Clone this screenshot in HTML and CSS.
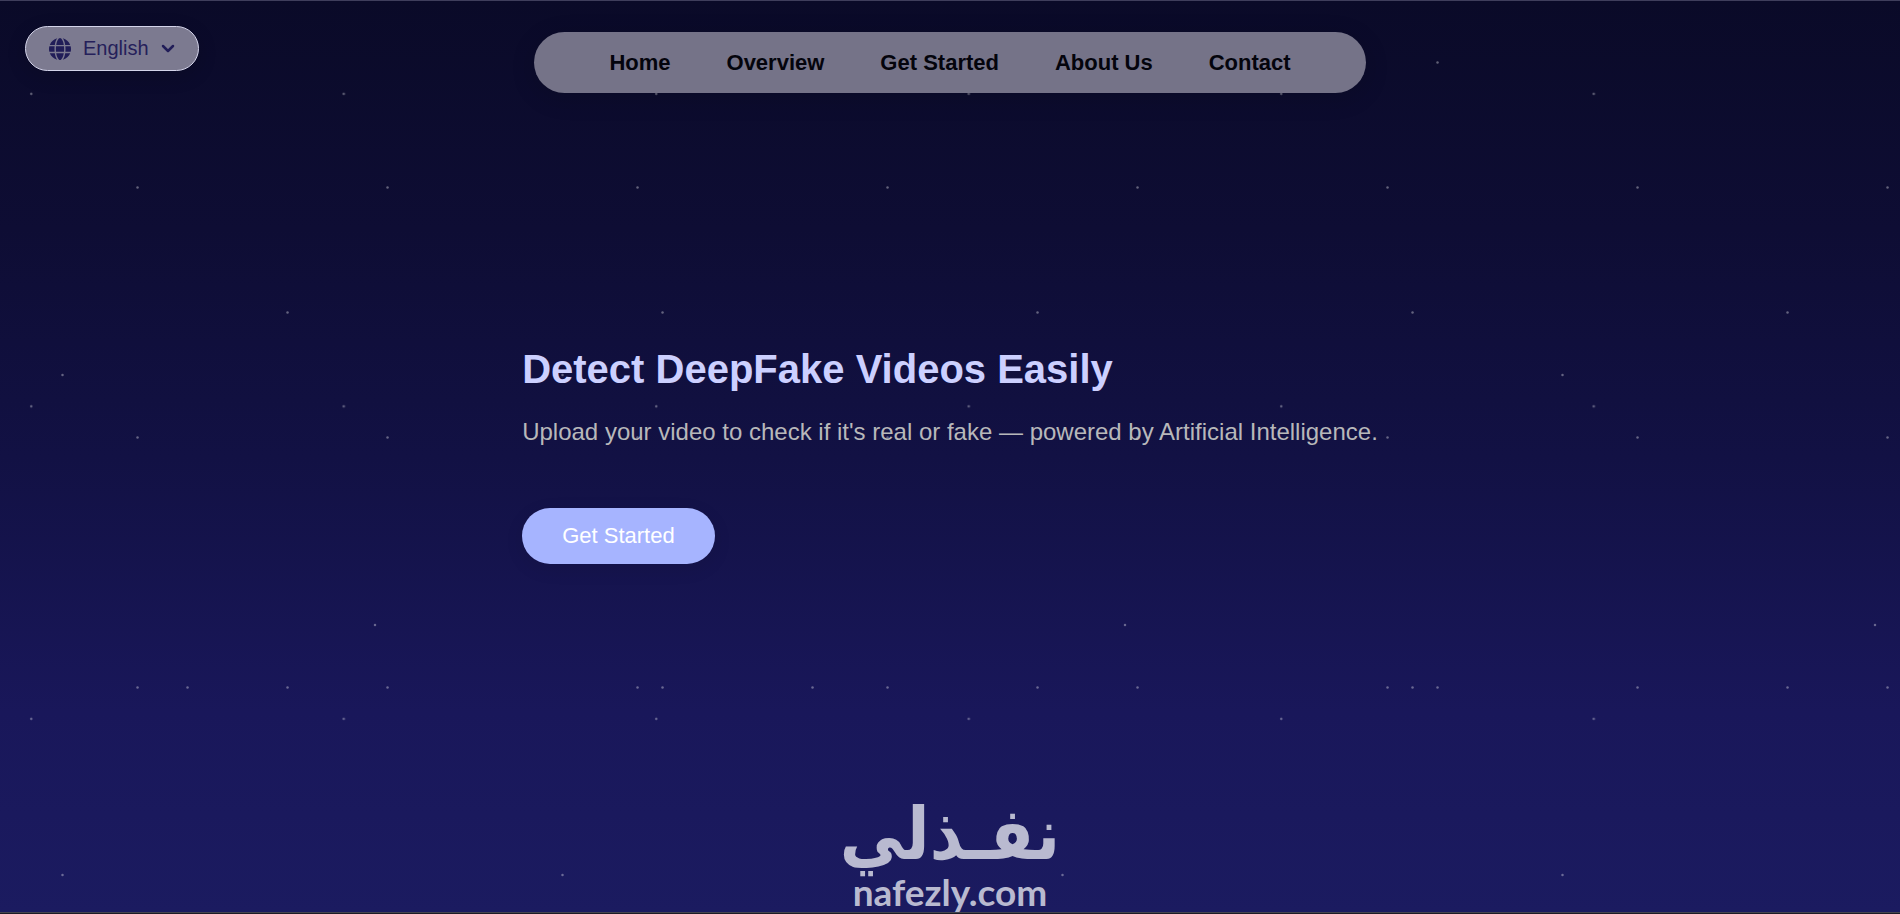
FILE: index.html
```html
<!DOCTYPE html>
<html lang="en">
<head>
<meta charset="utf-8">
<title>DeepFake Detector</title>
<link rel="stylesheet" href="styles.css">
</head>
<body>
<svg class="stars" aria-hidden="true">
  <defs>
    <pattern id="s1" width="200" height="200" patternUnits="userSpaceOnUse" patternTransform="scale(1.25)"><circle cx="110" cy="150" r="1"/></pattern>
    <pattern id="s2" width="250" height="250" patternUnits="userSpaceOnUse" patternTransform="scale(1.25)"><circle cx="25" cy="75" r="1"/></pattern>
    <pattern id="s3" width="300" height="300" patternUnits="userSpaceOnUse" patternTransform="scale(1.25)"><circle cx="230" cy="250" r="1"/></pattern>
    <pattern id="s4" width="400" height="400" patternUnits="userSpaceOnUse" patternTransform="scale(1.25)"><circle cx="50" cy="300" r="1"/></pattern>
    <pattern id="s5" width="500" height="500" patternUnits="userSpaceOnUse" patternTransform="scale(1.25)"><circle cx="150" cy="50" r="1"/></pattern>
    <pattern id="s6" width="600" height="600" patternUnits="userSpaceOnUse" patternTransform="scale(1.25)"><circle cx="300" cy="500" r="1"/></pattern>
  </defs>
  <rect width="100%" height="100%" fill="url(#s1)"/>
  <rect width="100%" height="100%" fill="url(#s2)"/>
  <rect width="100%" height="100%" fill="url(#s3)"/>
  <rect width="100%" height="100%" fill="url(#s4)"/>
  <rect width="100%" height="100%" fill="url(#s5)"/>
  <rect width="100%" height="100%" fill="url(#s6)"/>
</svg>
<div class="page">
  <header class="top">
    <button class="lang" type="button">
      <svg class="globe" viewBox="0 0 512 512" aria-hidden="true"><path d="M352 256c0 22.200-1.200 43.600-3.300 64H163.300c-2.200-20.400-3.300-41.800-3.300-64s1.200-43.600 3.300-64H348.700c2.200 20.400 3.300 41.800 3.300 64zm28.800-64H503.900c5.300 20.500 8.100 41.900 8.100 64s-2.800 43.500-8.100 64H380.800c2.100-20.600 3.200-42 3.200-64s-1.100-43.400-3.200-64zm112.600-32H376.700c-10-63.900-29.800-117.400-55.300-151.600c78.300 20.700 142 77.500 171.900 151.600zm-149.100 0H167.700c6.100-36.400 15.500-68.600 27-94.700c10.500-23.600 22.200-40.700 33.500-51.500C239.400 3.200 248.700 0 256 0s16.600 3.200 27.800 13.800c11.300 10.800 23 27.900 33.500 51.500c11.600 26 20.900 58.200 27 94.700zm-209 0H18.600C48.600 85.900 112.200 29.100 190.600 8.400C165.100 42.600 145.300 96.100 135.300 160zM8.100 192H131.200c-2.100 20.600-3.200 42-3.200 64s1.100 43.400 3.200 64H8.100C2.800 299.500 0 278.100 0 256s2.800-43.500 8.100-64zM194.700 446.600c-11.600-26-20.900-58.200-27-94.600H344.300c-6.100 36.400-15.500 68.600-27 94.600c-10.500 23.600-22.200 40.700-33.500 51.500C272.600 508.800 263.300 512 256 512s-16.600-3.200-27.800-13.800c-11.300-10.800-23-27.900-33.500-51.500zM135.300 352c10 63.900 29.800 117.400 55.300 151.600C112.200 482.900 48.600 426.100 18.600 352H135.300zm358.100 0c-30 74.100-93.600 130.900-171.900 151.600c25.500-34.200 45.200-87.700 55.300-151.600H493.400z"/></svg>
      <span>English</span>
      <svg class="chevron" viewBox="0 0 14 9" aria-hidden="true"><path d="M2 2l5 5 5-5"/></svg>
    </button>
    <nav class="nav">
      <a href="#home">Home</a>
      <a href="#overview">Overview</a>
      <a href="#start">Get Started</a>
      <a href="#about">About Us</a>
      <a href="#contact">Contact</a>
    </nav>
  </header>
  <main class="hero">
    <div class="intro">
      <h1>Detect DeepFake Videos Easily</h1>
      <p>Upload your video to check if it's real or fake — powered by Artificial Intelligence.</p>
      <button class="start" type="button">Get Started</button>
    </div>
  </main>
  <footer class="brand">
    <span class="brand-ar" lang="ar" dir="rtl">نفـذلي</span>
    <span class="brand-en">nafezly.com</span>
  </footer>
</div>
</body>
</html>
```

FILE: styles.css
```css
* { box-sizing: border-box; }

body {
  margin: 0;
  font-family: "Liberation Sans", Arial, sans-serif;
  background: linear-gradient(180deg, #0a0a28 0%, #0e0d34 25%, #121144 50%, #19175a 78%, #1b1b60 100%);
}

.stars {
  position: absolute;
  inset: 0;
  width: 100%;
  height: 100%;
  fill: #fff;
  opacity: 0.35;
}

.page {
  position: relative;
  min-height: 100vh;
  display: flex;
  flex-direction: column;
  border-top: 1px solid #3f3e5c;
  border-bottom: 1px solid #1c1c26;
}

.top {
  display: grid;
  grid-template-columns: 1fr auto 1fr;
  align-items: start;
  padding: 25px 25px 0;
}

.lang {
  justify-self: start;
  display: flex;
  align-items: center;
  gap: 12px;
  height: 45px;
  padding: 0 23px;
  border: 1px solid #d4d4ea;
  border-radius: 23px;
  background: #7c7a90;
  color: #25205a;
  font: 20px "Liberation Sans", Arial, sans-serif;
  box-shadow: 0 5px 19px rgba(0, 0, 0, 0.15);
}

.globe { width: 22px; height: 22px; fill: #211d58; }

.chevron {
  width: 14px;
  height: 9px;
  fill: none;
  stroke: #211d58;
  stroke-width: 2.5;
  stroke-linecap: round;
  stroke-linejoin: round;
}

.nav {
  display: flex;
  gap: 56px;
  margin-top: 6px;
  padding: 18px 75px 17px;
  border-radius: 31px;
  background: #757388;
  box-shadow: 0 5px 25px rgba(0, 0, 0, 0.15);
}

.nav a {
  color: #04040c;
  font-size: 22px;
  line-height: 26px;
  font-weight: 700;
  text-decoration: none;
}

.hero {
  flex: 1;
  display: flex;
  justify-content: center;
  padding-top: 252px;
}

.intro h1 {
  margin: 0 0 24px;
  color: #ccd0ff;
  font-size: 40px;
  line-height: 48px;
}

.intro p {
  margin: 0 0 61px;
  color: #b8b8ba;
  font-size: 24px;
  line-height: 30px;
}

.start {
  height: 56px;
  padding: 0 40px;
  border: 0;
  border-radius: 28px;
  background: #a6b4ff;
  color: #fff;
  font: 22px "Liberation Sans", Arial, sans-serif;
  box-shadow: 0 5px 19px rgba(0, 0, 0, 0.08);
}

.brand {
  display: flex;
  flex-direction: column;
  align-items: center;
  border-bottom: 1px solid #45454f;
  color: #b9bad0;
}

.brand-ar {
  font: 700 72px/76px "DejaVu Sans Condensed", "DejaVu Sans", sans-serif;
}

.brand-en {
  font: 700 37px/40px Lato, sans-serif;
}
```
